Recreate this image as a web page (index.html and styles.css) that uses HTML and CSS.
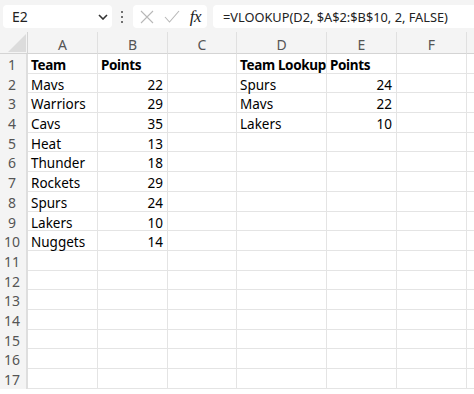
FILE: index.html
```html
<!DOCTYPE html>
<html lang="en">
<head>
  <meta charset="UTF-8" />
  <title>VLOOKUP</title>
  <link rel="stylesheet" href="styles.css">
</head>
<body>
  <div class="toolbar">
    <div class="namebox">
      <span>E2</span>
      <svg class="chev" width="10" height="6" viewBox="0 0 10 6"><path d="M1 1 L5 5 L9 1" fill="none" stroke="#333" stroke-width="1.6"/></svg>
    </div>
    <div class="dots"><i></i><i></i><i></i></div>
    <div class="fxbox">
      <svg width="14" height="14" viewBox="0 0 14 14"><path d="M1 1 L13 13 M13 1 L1 13" stroke="#b8b8b8" stroke-width="1.1"/></svg>
      <svg width="16" height="13" viewBox="0 0 16 13"><path d="M1 7 L5.5 12 L15 1" fill="none" stroke="#b8b8b8" stroke-width="1.1"/></svg>
      <span class="fx">fx</span>
    </div>
    <div class="formula">=VLOOKUP(D2, $A$2:$B$10, 2, FALSE)</div>
  </div>

  <div id="sheet" class="sheet"></div>

  <script>
    const cols = ['A', 'B', 'C', 'D', 'E', 'F', ''];
    const data = {
      1: [['Team', 'b'], ['Points', 'b'], '', ['Team Lookup', 'b'], ['Points', 'b']],
      2: ['Mavs', 22, '', 'Spurs', 24],
      3: ['Warriors', 29, '', 'Mavs', 22],
      4: ['Cavs', 35, '', 'Lakers', 10],
      5: ['Heat', 13],
      6: ['Thunder', 18],
      7: ['Rockets', 29],
      8: ['Spurs', 24],
      9: ['Lakers', 10],
      10: ['Nuggets', 14]
    };

    const sheet = document.getElementById('sheet');

    function cell(cls, text) {
      const d = document.createElement('div');
      d.className = cls;
      d.textContent = text;
      sheet.appendChild(d);
    }

    const corner = document.createElement('div');
    corner.className = 'corner';
    corner.innerHTML = '<svg width="18" height="18" viewBox="0 0 18 18"><path d="M18 0 L18 18 L0 18 Z" fill="#dcdcdc"/></svg>';
    sheet.appendChild(corner);
    cols.forEach(c => cell('colhead', c));

    for (let r = 1; r <= 17; r++) {
      cell('rowhead', r);
      const row = data[r] || [];
      cols.forEach((c, i) => {
        let v = row[i];
        let cls = 'cell';
        if (Array.isArray(v)) { cls += ' bold'; v = v[0]; }
        if (typeof v === 'number') cls += ' num';
        cell(cls, v === undefined ? '' : v);
      });
    }
  </script>
</body>
</html>
```

FILE: styles.css
```css
body {
  margin: 0;
  font-family: "Noto Sans", "Open Sans", sans-serif;
  background-color: #ffffff;
  color: #000;
  width: 474px;
  height: 394px;
  overflow: hidden;
}

.toolbar {
  display: flex;
  align-items: stretch;
  height: 23px;
  padding: 5px 0 4px 3px;
  background-color: #f4f4f4;
}

.namebox {
  width: 96px;
  display: flex;
  align-items: center;
  justify-content: space-between;
  background-color: #fff;
  border-radius: 4px;
  padding: 0 4px 0 9px;
  font-size: 14px;
  color: #222;
}

.dots {
  width: 20px;
  display: flex;
  flex-direction: column;
  align-items: center;
  justify-content: center;
  gap: 3px;
}

.dots i {
  width: 2px;
  height: 2px;
  background-color: #444;
  border-radius: 1px;
}

.fxbox {
  width: 74px;
  margin-left: 1px;
  display: flex;
  align-items: center;
  justify-content: space-between;
  padding: 0 6px 0 7px;
  box-sizing: border-box;
  background-color: #fff;
  border-radius: 4px;
}

.fx {
  font-family: "Liberation Serif", serif;
  font-style: italic;
  font-size: 17px;
  color: #222;
  letter-spacing: -0.5px;
}

.formula {
  flex: 1;
  margin-left: 6px;
  padding-left: 10px;
  display: flex;
  align-items: center;
  background-color: #fff;
  border-radius: 4px 0 0 4px;
  font-size: 12.8px;
  color: #222;
  white-space: nowrap;
}

.sheet {
  display: grid;
  grid-template-columns: 28px 70px 70px 69px 90px 70px 70px 30px;
  grid-template-rows: 22px;
  grid-auto-rows: 19.7px;
  font-size: 13.5px;
}

.corner {
  background-color: #f4f4f4;
  border-bottom: 1px solid #d4d4d4;
  border-right: 1px solid #d4d4d4;
  display: flex;
  align-items: flex-end;
  justify-content: flex-end;
  padding: 0 1px 1px 0;
}

.colhead {
  background-color: #f4f4f4;
  border-bottom: 1px solid #d4d4d4;
  border-right: 1px solid #e0e0e0;
  color: #555;
  text-align: center;
  line-height: 26px;
  font-size: 14px;
}

.rowhead {
  background-color: #f4f4f4;
  border-right: 2px solid #dedede;
  color: #555;
  text-align: center;
  padding-right: 2px;
  line-height: 22px;
  font-size: 14px;
}

.cell {
  border-right: 1px solid #e4e4e4;
  border-bottom: 1px solid #e4e4e4;
  padding: 0 4px 0 3px;
  line-height: 22px;
  white-space: nowrap;
}

.bold {
  font-weight: 700;
  letter-spacing: -0.35px;
}

.num {
  text-align: right;
}
```
